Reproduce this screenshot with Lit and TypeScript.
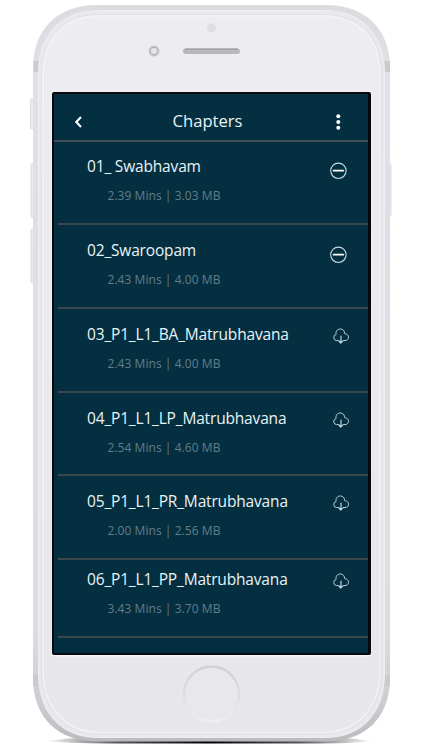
import { LitElement, html, css, svg } from "lit";
import { customElement, property } from "lit/decorators.js";
import { styleMap } from "lit/directives/style-map.js";

interface Chapter {
  title: string;
  mins: string;
  size: string;
  saved: boolean;
  height: number;
  lead: number;
}

const CHAPTERS: Chapter[] = [
  { title: "01_ Swabhavam", mins: "2.39", size: "3.03", saved: true, height: 83, lead: 13 },
  { title: "02_Swaroopam", mins: "2.43", size: "4.00", saved: true, height: 84, lead: 14 },
  { title: "03_P1_L1_BA_Matrubhavana", mins: "2.43", size: "4.00", saved: false, height: 84, lead: 14 },
  { title: "04_P1_L1_LP_Matrubhavana", mins: "2.54", size: "4.60", saved: false, height: 83, lead: 14 },
  { title: "05_P1_L1_PR_Matrubhavana", mins: "2.00", size: "2.56", saved: false, height: 84, lead: 14 },
  { title: "06_P1_L1_PP_Matrubhavana", mins: "3.43", size: "3.70", saved: false, height: 78, lead: 8 },
];

@customElement("chapter-row")
export class ChapterRow extends LitElement {
  @property({ attribute: false }) chapter!: Chapter;

  static styles = css`
    :host { display: block; }
    .row {
      box-sizing: border-box;
      margin-left: 4px;
      padding-left: 29px;
      border-bottom: 2px solid #3b474e;
      display: flex;
      justify-content: space-between;
    }
    .title {
      font-size: 15.5px;
      line-height: 22px;
      letter-spacing: -0.17px;
      color: #eaf3f6;
      white-space: pre;
    }
    .meta {
      margin: 10px 0 0 20.5px;
      font-size: 12px;
      line-height: 18px;
      letter-spacing: 0.05px;
      color: #657b88;
      white-space: pre;
    }
    .icon { display: block; flex: none; }
    .minus { width: 18px; height: 18px; margin: 6.5px 21px 0 0; }
    .cloud { width: 18px; height: 18px; margin: 4px 18px 0 0; }
  `;

  render() {
    const c = this.chapter;
    return html`
      <div class="row" style=${styleMap({ height: `${c.height}px`, paddingTop: `${c.lead}px` })}>
        <div>
          <div class="title">${c.title}</div>
          <div class="meta">${c.mins} Mins | ${c.size} MB</div>
        </div>
        ${c.saved
          ? html`<svg class="icon minus" viewBox="0 0 18 18" fill="none" stroke="#c9dbe3">
              <circle cx="9.400" cy="8.800" r="7.7" stroke-width="1.100" />
              <path d="M4.600 8.700h9.600" stroke="#fff" stroke-width="1.700" stroke-linecap="round" />
            </svg>`
          : html`<svg class="icon cloud" viewBox="0 0 18 18" fill="none" stroke="#bfd3dd" stroke-linecap="round" stroke-linejoin="round">
              <path stroke-width="1" d="M7 13.6H4.6A3.1 3.1 0 0 1 4.1 7.5C3.4 4.5 5.4 2 8.3 2c2.100 0 3.600 1.100 4.100 3.100.1.700 0 1.200.3 1.500.3.300 1 .1 1.900.6 1.200.6 1.900 1.700 1.900 3 0 2-1.500 3.400-3.500 3.400H11" />
              <path stroke-width="1.200" d="M9 9v6.500" />
              <path stroke-width="1" fill="#d8e6ec" d="M7.300 14.500h3.400L9 16.200z" />
            </svg>`}
      </div>
    `;
  }
}

@customElement("app-root")
export class AppRoot extends LitElement {
  static styles = css`
    :host {
      display: block;
      box-sizing: border-box;
      width: 422px;
      height: 750px;
      padding: 5px 0 0 33px;
      background: #fff;
      overflow: hidden;
      font-family: "Open Sans", "Noto Sans", sans-serif;
    }
    .phone {
      position: relative;
      box-sizing: border-box;
      width: 357px;
      height: 737px;
      padding: 87px 19px 0 19px;
    }
    .frame { position: absolute; left: -33px; top: -5px; width: 422px; height: 750px; }
    .screen {
      position: relative;
      box-sizing: border-box;
      width: 319px;
      height: 563px;
      border: 2px solid #07090c;
      border-right-width: 3px;
      border-radius: 2px;
      background: #032f41;
      overflow: hidden;
    }
    .bar {
      box-sizing: border-box;
      height: 48px;
      padding: 6px 26px 0 20px;
      border-bottom: 2px solid #3f4e57;
      display: grid;
      grid-template-columns: 10px 1fr 8px;
      align-items: center;
    }
    .heading {
      margin: 0;
      padding: 2px 3px 0 0;
      text-align: center;
      font-size: 16.6px;
      line-height: 24px;
      font-weight: 400;
      color: #eaf3f6;
    }
    .back { width: 10px; height: 14px; margin-top: 3px; }
    .more { width: 8px; height: 18px; margin-top: 3px; }
  `;

  private frame() {
    return svg`
      <defs>
        <linearGradient id="rim" x1="0" y1="0" x2="0" y2="1">
          <stop offset="0" stop-color="#dcdbe0" />
          <stop offset=".1" stop-color="#e1e0e6" />
          <stop offset=".85" stop-color="#dddce1" />
          <stop offset=".95" stop-color="#cccbd0" />
          <stop offset="1" stop-color="#bbbabf" />
        </linearGradient>
        <linearGradient id="face" x1="0" y1="0" x2="0" y2="1">
          <stop offset="0" stop-color="#edecf1" />
          <stop offset="1" stop-color="#e7e6eb" />
        </linearGradient>
        <linearGradient id="ring" x1="0" y1="0" x2="0" y2="1">
          <stop offset="0" stop-color="#d2d1d6" />
          <stop offset=".5" stop-color="#dddce1" />
          <stop offset="1" stop-color="#efeef2" />
        </linearGradient>
        <linearGradient id="shade" x1="0" y1="0" x2="1" y2="0">
          <stop offset="0" stop-color="#333" stop-opacity="0" />
          <stop offset=".22" stop-color="#222" stop-opacity=".75" />
          <stop offset=".5" stop-color="#000" />
          <stop offset=".78" stop-color="#222" stop-opacity=".75" />
          <stop offset="1" stop-color="#333" stop-opacity="0" />
        </linearGradient>
      </defs>
      <path d="M44 741Q70 738 95 737H328Q350 738 374 741Q350 743.500 310 743.500H108Q70 743 44 741Z" fill="url(#shade)" />
      <g fill="#ebeaef" stroke="#d2d1d6" stroke-width=".7">
        <rect x="30.500" y="99" width="5" height="30" rx="1" />
        <rect x="31" y="163.500" width="5" height="54" rx="1" />
        <rect x="31" y="229" width="5" height="54" rx="1" />
        <rect x="387" y="163.500" width="4" height="52" rx="1" />
      </g>
      <path d="M98 5H325C366 5 390 29 390 68V678C390 717 366 741.500 325 741.500H98C57 741.500 33 717 33 678V68C33 29 57 5 98 5Z" fill="url(#rim)" />
      <path d="M33.500 61h5.500v11h-5.500zM384 61h6v11h-6zM33 675h6v11h-6zM384 675h6v11h-6z" fill="#cbcbce" />
      <path d="M98 10.500H325C362 10.500 384.500 35 384.500 73V673C384.500 713 362 737.500 325 737.500H98C61 737.500 38.500 713 38.500 673V73C38.500 35 61 10.500 98 10.500Z" fill="#e9e8ed" stroke="#efeef3" stroke-width="1" />
      <path d="M99 14.500H324C360 14.500 381.500 37 381.500 75V671C381.500 709 360 734 324 734H99C63 734 41.500 709 41.500 671V75C41.500 37 63 14.500 99 14.500Z" fill="url(#face)" stroke="#dfdee4" stroke-width=".8" />
      <path d="M100 16H323C358 16 380 39 380 76V670C380 707 358 732.500 323 732.500H100C65 732.500 43 707 43 670V76C43 39 65 16 100 16Z" fill="none" stroke="#f2f1f5" stroke-width="1.500" />
      <circle cx="211.500" cy="28" r="4.500" fill="#dedde2" />
      <circle cx="154" cy="51" r="5.800" fill="#d4d3d7" />
      <circle cx="154" cy="51" r="3.900" fill="#dedde1" stroke="#b0afb4" stroke-width="1.200" />
      <circle cx="154" cy="50.800" r="1.800" fill="#ebeaee" />
      <rect x="183" y="48.500" width="57" height="5.500" rx="2.700" fill="#b9b8bd" />
      <path d="M185.500 49.200H237.500" stroke="#9d9ca1" stroke-width="1.200" stroke-linecap="round" />
      <rect x="51.500" y="91.500" width="320" height="565" rx="2.500" fill="#f5f4f7" />
      <circle cx="211.500" cy="694" r="27.500" fill="#e8e7ec" stroke="url(#ring)" stroke-width="2.500" />
    `;
  }

  render() {
    return html`
      <div class="phone">
        <svg class="frame" viewBox="0 0 422 750">${this.frame()}</svg>
        <div class="screen">
          <header class="bar">
            <svg class="back" viewBox="0 0 10 14" fill="none" stroke="#fff" stroke-width="2.100">
              <path d="M7 2 2.300 7 7 12" />
            </svg>
            <h1 class="heading">Chapters</h1>
            <svg class="more" viewBox="0 0 8 18" fill="#fff">
              <circle cx="4.300" cy="3.300" r="2" />
              <circle cx="4.300" cy="9" r="2" />
              <circle cx="4.300" cy="14.700" r="2" />
            </svg>
          </header>
          ${CHAPTERS.map((c) => html`<chapter-row .chapter=${c}></chapter-row>`)}
        </div>
      </div>
    `;
  }
}
